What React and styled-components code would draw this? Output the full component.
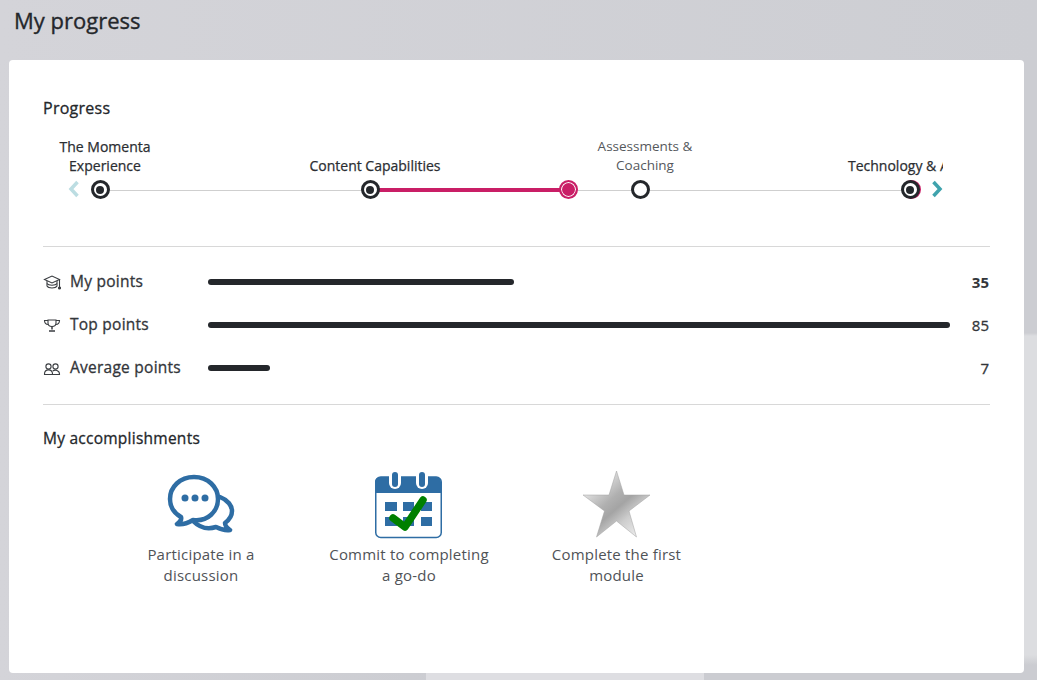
import React from 'react';
import styled, { createGlobalStyle } from 'styled-components';

const GlobalStyle = createGlobalStyle`
  html, body {
    margin: 0;
    padding: 0;
    height: 100%;
  }
  body {
    font-family: "Open Sans", "Liberation Sans", sans-serif;
    color: #24272b;
    overflow: hidden;
    background: #cfd0d5;
  }
`;

const Page = styled.div`
  width: 1037px;
  height: 680px;
  box-sizing: border-box;
  padding: 7px 13px 7px 9px;
  display: flex;
  flex-direction: column;
  background:
    linear-gradient(90deg, transparent 0 426px, #dedee2 426px 704px, transparent 704px) bottom left / 100% 7px no-repeat,
    linear-gradient(90deg, #d4d4d9 0%, #cdced3 100%) top / 100% 60px no-repeat,
    linear-gradient(180deg, #cccdd2 0 333px, #dcdde0 336px 655px, #cbccd1 665px) right / 13px 100% no-repeat,
    linear-gradient(90deg, #d4d4d9 0%, #cbccd1 45%);
`;

const PageTitle = styled.h1`
  margin: 0 0 0 5px;
  height: 53px;
  font-size: 22px;
  line-height: 27px;
  font-weight: 400;
  -webkit-text-stroke: 0.35px currentColor;
  color: #24272b;
`;

const Card = styled.main`
  flex: 1;
  background: #fff;
  border-radius: 4px;
  padding: 38px 34px 0;
  display: flex;
  flex-direction: column;
`;

const SectionTitle = styled.h2`
  margin: 0;
  font-size: ${p => p.$size}px;
  line-height: 20px;
  font-weight: 400;
  letter-spacing: 0.25px;
  -webkit-text-stroke: 0.3px currentColor;
  color: #24272b;
`;

const Timeline = styled.div`
  position: relative;
  margin: 17px 47px 0 14px;
  height: 64px;
  overflow: hidden;
`;

const Stops = styled.div`
  display: flex;
  margin-left: -92px;
  width: 1080px;
  height: 64px;
`;

const Stop = styled.div`
  width: 270px;
  flex: none;
  height: 64px;
  display: flex;
  flex-direction: column;
  align-items: center;
  justify-content: flex-end;
`;

const StopLabel = styled.div`
  width: ${p => (p.$clipped ? 134 : 150)}px;
  font-size: ${p => (p.$done ? 14 : 13.5)}px;
  line-height: 19px;
  text-align: ${p => (p.$clipped ? 'left' : 'center')};
  -webkit-text-stroke: ${p => (p.$done ? '0.25px currentColor' : '0')};
  color: ${p => (p.$done ? '#2b2e32' : '#55585c')};
  margin: 0 -10px 5px 0;
  white-space: ${p => (p.$clipped ? 'nowrap' : 'normal')};
`;

const Node = styled.div`
  width: 19px;
  height: 19px;
  box-sizing: border-box;
  border: 3px solid #24272b;
  border-radius: 50%;
  background: #fff;
  display: flex;
  align-items: center;
  justify-content: center;
  position: relative;
  z-index: 1;
  &::after {
    content: '';
    display: ${p => (p.$done ? 'block' : 'none')};
    width: 8px;
    height: 8px;
    border-radius: 50%;
    background: #24272b;
  }
`;

const Rail = styled.div`
  position: absolute;
  left: 43px;
  top: 55px;
  width: 810px;
  height: 1px;
  background: #cfcfcf;
`;

const RailProgress = styled.div`
  position: absolute;
  left: 313px;
  top: 53px;
  width: 198px;
  height: 4px;
  background: #c91e66;
  z-index: 1;
`;

const Marker = styled.div`
  position: absolute;
  left: ${p => p.$left}px;
  top: 45px;
  width: 19px;
  height: 19px;
  box-sizing: border-box;
  border-radius: 50%;
  background: #c91e66;
  border: 2px solid #c91e66;
  box-shadow: inset 0 0 0 1px #fff;
  z-index: ${p => p.$z};
`;

const Chevron = styled.svg`
  position: absolute;
  top: 45px;
  left: ${p => p.$left}px;
  width: 12px;
  height: 18px;
  fill: none;
  stroke: ${p => p.$color};
  stroke-width: 3.5;
  z-index: 2;
`;

const Divider = styled.hr`
  border: 0;
  border-top: 1px solid #d8d8d8;
  margin: ${p => p.$margin};
`;

const Rows = styled.div`
  display: flex;
  flex-direction: column;
  gap: 20px;
`;

const Row = styled.div`
  display: flex;
  align-items: center;
  height: 23px;
`;

const RowLabel = styled.div`
  width: 165px;
  flex: none;
  display: flex;
  align-items: center;
  gap: 9px;
  margin-bottom: 2px;
  font-size: 15.5px;
  line-height: 20px;
  letter-spacing: 0.25px;
  -webkit-text-stroke: 0.3px currentColor;
  color: #33363a;
`;

const RowIcon = styled.svg`
  width: 18px;
  height: 18px;
  flex: none;
  margin-top: 2px;
  fill: none;
  stroke: #3a3d41;
  stroke-width: 1.1;
`;

const BarTrack = styled.div`
  width: 742px;
  flex: none;
`;

const Bar = styled.div`
  height: 6px;
  border-radius: 3px;
  background: #24272b;
`;

const RowValue = styled.div`
  flex: 1;
  text-align: right;
  font-size: 15px;
  font-weight: ${p => (p.$bold ? 700 : 400)};
  -webkit-text-stroke: ${p => (p.$bold ? '0' : '0.3px currentColor')};
  color: #33363a;
  padding-right: 1px;
`;

const Badges = styled.div`
  display: flex;
  margin-top: 22px;
  padding-left: 85px;
`;

const Badge = styled.div`
  width: ${p => p.$width}px;
  flex: none;
  display: flex;
  flex-direction: column;
  align-items: center;
`;

const BadgeArt = styled.svg`
  width: 76px;
  height: 70px;
  flex: none;
`;

const BadgeText = styled.div`
  margin-top: 4px;
  font-size: 15px;
  line-height: 21px;
  letter-spacing: 0.2px;
  text-align: center;
  color: #505357;
  white-space: nowrap;
`;

const stops = [
  { label: 'The Momenta Experience', done: true },
  { label: 'Content Capabilities', done: true },
  { label: 'Assessments & Coaching', done: false },
  // only this much of the last label is visible, the rest scrolls off
  { label: 'Technology & A', done: true, clipped: true },
];

const points = [
  { label: 'My points', value: 35, width: 306, bold: true, icon: 'cap' },
  { label: 'Top points', value: 85, width: 742, icon: 'trophy' },
  { label: 'Average points', value: 7, width: 62, icon: 'people' },
];

const PointIcon = ({ type }) => (
  <RowIcon viewBox="0 0 18 18">
    {type === 'cap' && (
      <>
        <path d="M1.5 6.5 9 3l7.5 3.500L9 10z" />
        <path d="M4 8v5c1.500 2.600 8.500 2.600 10 0V8" />
        <path d="M4 10.500c1.500 2.300 8.500 2.300 10 0" />
        <path d="M16.500 6.500V14" />
        <circle cx="16.500" cy="15" r="1" fill="#3a3d41" />
      </>
    )}
    {type === 'trophy' && (
      <>
        <path d="M5 4h8v3c0 2.500-1.700 3.500-4 3.500S5 9.500 5 7z" />
        <path d="M5 4.500H1.500c0 2.500 1.200 3.800 3.800 4M13 4.500h3.500c0 2.500-1.200 3.800-3.800 4" />
        <path d="M9 10.500v3M6 15h6" strokeWidth="1.500" />
      </>
    )}
    {type === 'people' && (
      <>
        <circle cx="5.500" cy="7.500" r="2.600" />
        <circle cx="12.500" cy="7.500" r="2.600" />
        <path d="M1.500 15c0-5.500 8-5.500 8 0v.500h-8z" />
        <path d="M9.500 15.500h7V15c0-3.700-4.500-4.700-6.800-3" />
      </>
    )}
  </RowIcon>
);

const DiscussionArt = () => (
  <BadgeArt viewBox="0 0 76 70">
    <path
      d="M31 7C17 7 7 17 7 29c0 8 4 14 11 18 1 3-1 5-4 7 6 1 11-1 16-4 15 2 25-9 25-21C55 17 45 7 31 7z"
      fill="#fff"
      stroke="#2e6da4"
      strokeWidth="4.500"
      strokeLinejoin="round"
    />
    <path
      d="M57 27c8 3 12 9 12 14 0 5-3 9-7 12 0 3 2 5 5 7-6 1-10-1-14-3-9 3-17 0-23-6"
      fill="none"
      stroke="#2e6da4"
      strokeWidth="4.500"
      strokeLinecap="round"
      strokeLinejoin="round"
    />
    <circle cx="22" cy="28" r="3.500" fill="#2e6da4" />
    <circle cx="32" cy="28" r="3.500" fill="#2e6da4" />
    <circle cx="42" cy="28" r="3.500" fill="#2e6da4" />
  </BadgeArt>
);

const CalendarArt = () => (
  <BadgeArt viewBox="1 0 76 70">
    <rect x="5.750" y="7" width="65.500" height="60.500" rx="5" fill="#fff" stroke="#2e6da4" strokeWidth="1.500" />
    <path d="M5 12a5 5 0 0 1 5-5h56a5 5 0 0 1 5 5v11H5z" fill="#2e6da4" />
    <rect x="19" y="0" width="12" height="19" rx="6" fill="#fff" />
    <rect x="46" y="0" width="12" height="19" rx="6" fill="#fff" />
    <rect x="22" y="2" width="6" height="15" rx="3" fill="#2e6da4" />
    <rect x="49" y="2" width="6" height="15" rx="3" fill="#2e6da4" />
    <g fill="#2e6da4">
      <rect x="15" y="32" width="12" height="9" />
      <rect x="33" y="32" width="11" height="9" />
      <rect x="51" y="32" width="11" height="9" />
      <rect x="15" y="47" width="12" height="9" />
      <rect x="33" y="47" width="11" height="9" />
      <rect x="51" y="47" width="11" height="9" />
    </g>
    <path d="M23 48l12 9 18-27" fill="none" stroke="#008000" strokeWidth="7.500" strokeLinejoin="round" strokeLinecap="round" />
  </BadgeArt>
);

const StarArt = () => (
  <BadgeArt viewBox="0 0 76 70">
    <defs>
      <linearGradient id="silver" x1="0.150" y1="0.100" x2="0.850" y2="0.900">
        <stop offset="0" stopColor="#f0f0f0" />
        <stop offset="0.400" stopColor="#b0b0b0" />
        <stop offset="0.550" stopColor="#a4a4a4" />
        <stop offset="0.750" stopColor="#cdcdcd" />
        <stop offset="1" stopColor="#e8e8e8" />
      </linearGradient>
    </defs>
    <path d="M37.500 1l7.500 24H71L50 41l7.500 26-20-16-20 16 8-26L4 25h26z" fill="url(#silver)" stroke="#a0a0a0" strokeWidth="0.500" />
  </BadgeArt>
);

const badges = [
  { text: ['Participate in a', 'discussion'], width: 146, Art: DiscussionArt },
  { text: ['Commit to completing', 'a go-do'], width: 270, Art: CalendarArt },
  { text: ['Complete the first', 'module'], width: 145, Art: StarArt },
];

export default function App() {
  return (
    <>
      <GlobalStyle />
      <Page>
        <PageTitle>My progress</PageTitle>
        <Card>
          <SectionTitle $size={16}>Progress</SectionTitle>
          <Timeline>
            <Rail />
            <RailProgress />
            <Marker $left={502} $z={2} />
            <Marker $left={845} $z={0} />
            <Chevron $left={11} $color="#bcdde2" viewBox="0 0 12 18">
              <path d="M9.500 2 3 9l6.500 7" />
            </Chevron>
            <Chevron $left={874} $color="#3fa3ad" viewBox="0 0 12 18">
              <path d="M2.500 2 9 9l-6.500 7" />
            </Chevron>
            <Stops>
              {stops.map(stop => (
                <Stop key={stop.label}>
                  <StopLabel $done={stop.done} $clipped={stop.clipped}>{stop.label}</StopLabel>
                  <Node $done={stop.done} />
                </Stop>
              ))}
            </Stops>
          </Timeline>
          <Divider $margin="47px 0 23px" />
          <Rows>
            {points.map(point => (
              <Row key={point.label}>
                <RowLabel>
                  <PointIcon type={point.icon} />
                  {point.label}
                </RowLabel>
                <BarTrack>
                  <Bar style={{ width: point.width }} />
                </BarTrack>
                <RowValue $bold={point.bold}>{point.value}</RowValue>
              </Row>
            ))}
          </Rows>
          <Divider $margin="25px 0 23px" />
          <SectionTitle $size={15.5}>My accomplishments</SectionTitle>
          <Badges>
            {badges.map(({ text, width, Art }) => (
              <Badge key={text[0]} $width={width}>
                <Art />
                <BadgeText>
                  {text[0]}
                  <br />
                  {text[1]}
                </BadgeText>
              </Badge>
            ))}
          </Badges>
        </Card>
      </Page>
    </>
  );
}
